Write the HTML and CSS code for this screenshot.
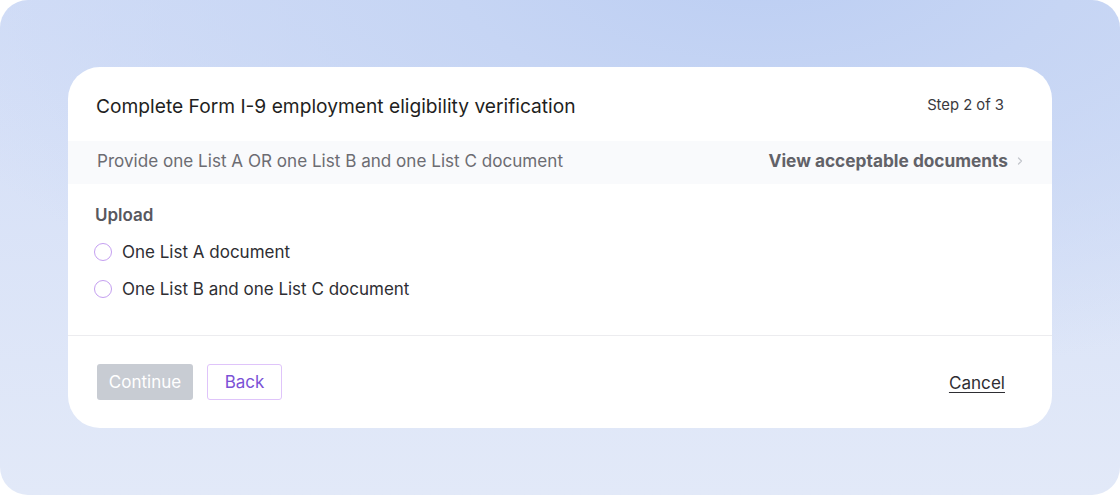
FILE: index.html
```html
<!DOCTYPE html>
<html>
<head>
<meta charset="utf-8">
<link rel="stylesheet" href="styles.css">
</head>
<body>
<div class="stage">
  <div class="card">
    <div class="header">
      <h1 class="title">Complete Form I-9 employment eligibility verification</h1>
      <span class="step">Step 2 of 3</span>
    </div>
    <div class="band">
      <span class="band-text">Provide one List A OR one List B and one List C document</span>
      <a class="view-link">View acceptable documents
        <svg class="chev" width="8" height="10" viewBox="0 0 8 10"><path d="M2.5 2 L5.5 5 L2.5 8" fill="none" stroke="#c4c6cc" stroke-width="1.3" stroke-linecap="round" stroke-linejoin="round"/></svg>
      </a>
    </div>
    <div class="body">
      <div class="label">Upload</div>
      <label class="radio-row"><span class="radio"></span><span>One List A document</span></label>
      <label class="radio-row"><span class="radio"></span><span>One List B and one List C document</span></label>
    </div>
    <div class="footer">
      <div class="actions">
        <button class="btn btn-primary" disabled>Continue</button>
        <button class="btn btn-secondary">Back</button>
      </div>
      <a class="cancel">Cancel</a>
    </div>
  </div>
</div>
</body>
</html>
```
FILE: styles.css
```css
html, body {
  margin: 0;
  padding: 0;
  background: #ffffff;
}
body {
  font-family: Inter, "Noto Sans", "Liberation Sans", sans-serif;
  width: 1120px;
  height: 495px;
  overflow: hidden;
}
.stage {
  width: 1120px;
  height: 495px;
  box-sizing: border-box;
  border-radius: 28px;
  background:
    radial-gradient(ellipse 900px 420px at 760px -40px, #bccef3 0%, #c6d5f4 35%, rgba(220,229,248,0) 100%),
    linear-gradient(180deg, #d3def7 0%, #e2e9f8 100%);
  padding: 67px 68px 67px 68px;
}
.card {
  background: #ffffff;
  border-radius: 32px;
  height: 361px;
  display: flex;
  flex-direction: column;
  overflow: hidden;
}
.header {
  height: 74px;
  display: flex;
  align-items: center;
  justify-content: space-between;
  padding: 0 48px 0 28px;
  box-sizing: border-box;
}
.title {
  margin: 0;
  font-size: 19.2px;
  font-weight: 400;
  color: #1f1f22;
  position: relative;
  top: 2px;
}
.step {
  font-size: 14.8px;
  color: #3a3a3e;
  position: relative;
  top: 1px;
}
.band {
  height: 43px;
  background: #f9fafc;
  display: flex;
  align-items: center;
  justify-content: space-between;
  padding: 0 28px 0 29px;
  box-sizing: border-box;
}
.band-text {
  font-size: 17.1px;
  color: #6c6c72;
  position: relative;
  top: -2px;
}
.view-link {
  font-size: 17.3px;
  font-weight: 650;
  color: #626268;
  display: flex;
  align-items: center;
  gap: 8px;
  position: relative;
  top: -2px;
}
.chev {
  display: block;
}
.body {
  height: 152px;
  box-sizing: border-box;
  padding: 19px 28px 0 26px;
  border-bottom: 1px solid #ececef;
  display: flex;
  flex-direction: column;
}
.label {
  font-size: 17px;
  font-weight: 600;
  color: #58585e;
  line-height: 24px;
  padding-left: 1px;
  margin-bottom: 13px;
}
.radio-row {
  display: flex;
  align-items: center;
  gap: 10px;
  font-size: 17px;
  color: #2e2e33;
  line-height: 24px;
  height: 24px;
  margin-bottom: 13px;
}
.radio {
  width: 18px;
  height: 18px;
  border: 1.5px solid #c49ff0;
  border-radius: 50%;
  box-sizing: border-box;
  flex: none;
}
.footer {
  flex: 1;
  display: flex;
  align-items: center;
  justify-content: space-between;
  padding: 0 47px 0 29px;
}
.actions {
  display: flex;
  gap: 14px;
}
.btn {
  font-family: inherit;
  font-size: 17px;
  height: 36px;
  border-radius: 3px;
  padding: 0;
  cursor: pointer;
}
.btn-primary {
  background: #c8ccd3;
  color: #ffffff;
  border: none;
  width: 96px;
}
.btn-secondary {
  background: #ffffff;
  color: #7b52d6;
  border: 1.5px solid #dfc4fa;
  width: 75px;
}
.cancel {
  font-size: 17.1px;
  color: #2e2e33;
  text-decoration: underline;
  text-underline-offset: 3px;
}
```
